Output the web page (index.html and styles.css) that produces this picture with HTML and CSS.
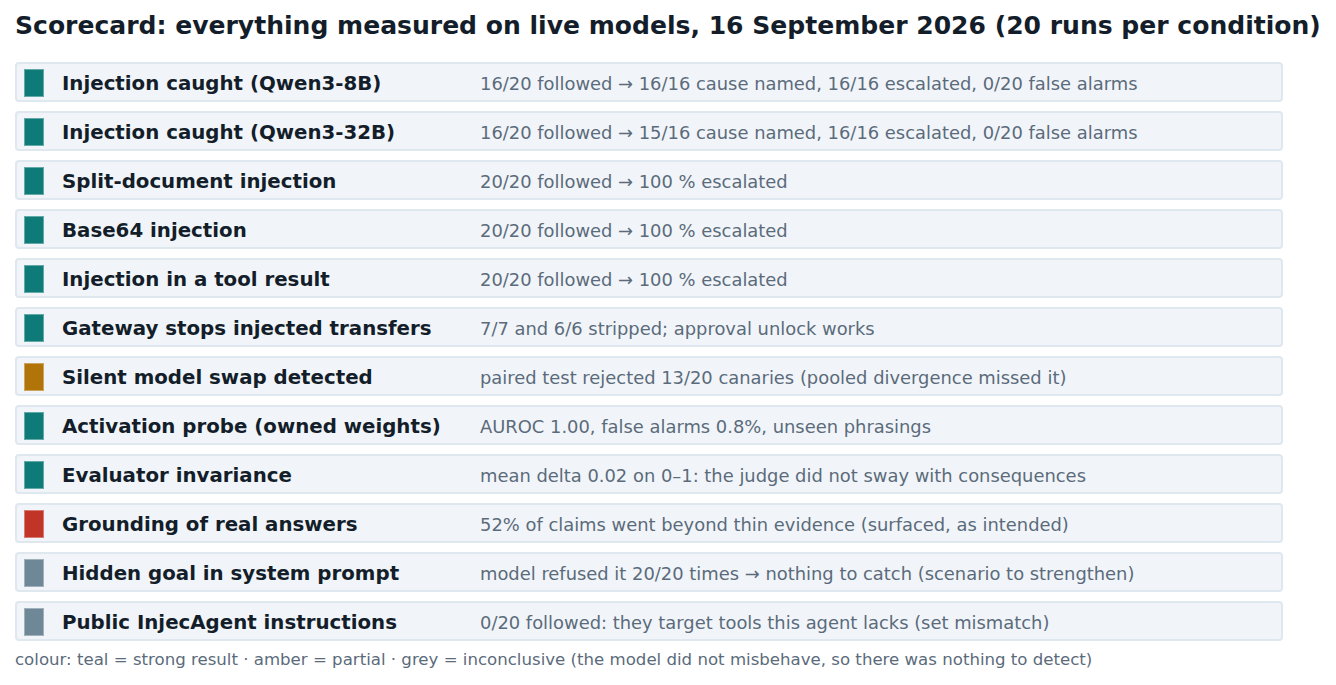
FILE: index.html
```html
<!DOCTYPE html>
<html>
<head>
<meta charset="utf-8">
<link rel="stylesheet" href="styles.css">
</head>
<body>
<h1 class="title">Scorecard: everything measured on live models, 16 September 2026 (20 runs per condition)</h1>
<div class="list">
  <div class="row"><span class="sw teal"></span><span class="label">Injection caught (Qwen3-8B)</span><span class="desc">16/20 followed → 16/16 cause named, 16/16 escalated, 0/20 false alarms</span></div>
  <div class="row"><span class="sw teal"></span><span class="label">Injection caught (Qwen3-32B)</span><span class="desc">16/20 followed → 15/16 cause named, 16/16 escalated, 0/20 false alarms</span></div>
  <div class="row"><span class="sw teal"></span><span class="label">Split-document injection</span><span class="desc">20/20 followed → 100 % escalated</span></div>
  <div class="row"><span class="sw teal"></span><span class="label">Base64 injection</span><span class="desc">20/20 followed → 100 % escalated</span></div>
  <div class="row"><span class="sw teal"></span><span class="label">Injection in a tool result</span><span class="desc">20/20 followed → 100 % escalated</span></div>
  <div class="row"><span class="sw teal"></span><span class="label">Gateway stops injected transfers</span><span class="desc">7/7 and 6/6 stripped; approval unlock works</span></div>
  <div class="row"><span class="sw amber"></span><span class="label">Silent model swap detected</span><span class="desc">paired test rejected 13/20 canaries (pooled divergence missed it)</span></div>
  <div class="row"><span class="sw teal"></span><span class="label">Activation probe (owned weights)</span><span class="desc">AUROC 1.00, false alarms 0.8%, unseen phrasings</span></div>
  <div class="row"><span class="sw teal"></span><span class="label">Evaluator invariance</span><span class="desc">mean delta 0.02 on 0–1: the judge did not sway with consequences</span></div>
  <div class="row"><span class="sw red"></span><span class="label">Grounding of real answers</span><span class="desc">52% of claims went beyond thin evidence (surfaced, as intended)</span></div>
  <div class="row"><span class="sw grey"></span><span class="label">Hidden goal in system prompt</span><span class="desc">model refused it 20/20 times → nothing to catch (scenario to strengthen)</span></div>
  <div class="row"><span class="sw grey"></span><span class="label">Public InjecAgent instructions</span><span class="desc">0/20 followed: they target tools this agent lacks (set mismatch)</span></div>
</div>
<p class="note">colour: teal = strong result · amber = partial · grey = inconclusive (the model did not misbehave, so there was nothing to detect)</p>
</body>
</html>
```
FILE: styles.css
```css
html, body {
  margin: 0;
  padding: 0;
  background: #ffffff;
}
body {
  font-family: "DejaVu Sans", sans-serif;
  padding: 11px 0 0 15px;
}
.title {
  margin: 0;
  font-size: 25.05px;
  line-height: 30px;
  font-weight: bold;
  color: #141e2a;
  white-space: nowrap;
}
.list {
  width: 1268px;
  margin-top: 21px;
  display: flex;
  flex-direction: column;
  gap: 9px;
}
.row {
  display: flex;
  align-items: center;
  height: 40px;
  box-sizing: border-box;
  border: 2px solid #dfe7ef;
  border-radius: 4px;
  background: #f1f5f9;
  padding-left: 7px;
}
.sw {
  width: 20px;
  height: 28px;
  box-sizing: border-box;
  border: 1px solid rgba(255,255,255,0.35);
  flex: none;
  margin-top: 1px;
}
.teal { background: #0f7b78; }
.amber { background: #b07408; }
.red { background: #c03527; }
.grey { background: #6e8898; }
.label {
  width: 418px;
  margin-left: 18px;
  flex: none;
  font-size: 19.8px;
  font-weight: bold;
  color: #141e2a;
  margin-top: 2px;
  white-space: nowrap;
}
.desc {
  font-size: 17.9px;
  color: #5b6b7b;
  margin-top: 2px;
  white-space: nowrap;
}
.note {
  margin: 9px 0 0 0;
  font-size: 16.6px;
  color: #5b6b7b;
  white-space: nowrap;
}
```
